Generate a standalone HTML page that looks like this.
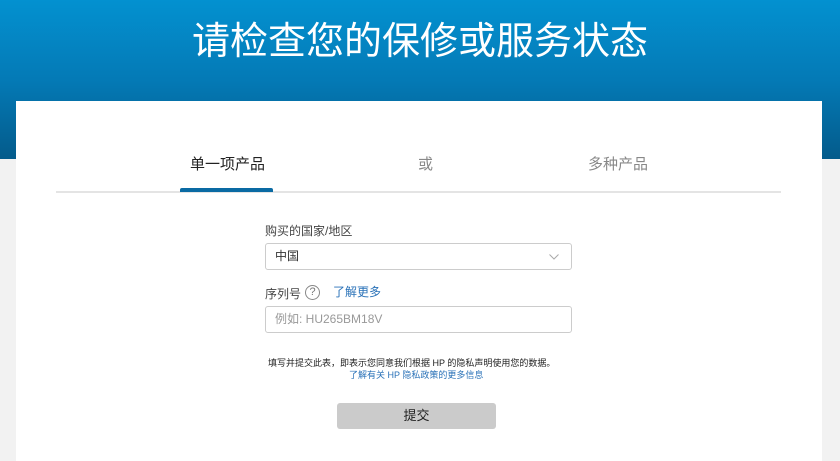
<!DOCTYPE html>
<html><head><meta charset="utf-8"><style>
*{margin:0;padding:0;box-sizing:border-box}
body{width:840px;height:449px;overflow:hidden;background:#f2f2f2;font-family:"Liberation Sans","Noto Sans CJK SC",sans-serif;position:relative}
.hdr{position:absolute;left:0;top:0;width:840px;height:159px;background:linear-gradient(#0391d0 0%,#047ab6 50%,#045b8b 100%)}
h1{position:absolute;left:0;width:840px;top:17px;text-align:center;color:#fff;font-weight:400;font-size:38px;line-height:50px}
.card{position:absolute;left:16px;top:101px;width:806px;height:360px;background:#fff}
.t{position:absolute;top:155px;font-size:15px;line-height:20px}
.line{position:absolute;left:56px;top:191px;width:725px;height:2px;background:#e4e4e4}
.act{position:absolute;left:180px;top:188px;width:93px;height:4px;background:#0a6aa3;border-radius:2px 2px 0 0}
.lbl{position:absolute;left:265px;font-size:12px;color:#444}
.box{position:absolute;left:265px;width:307px;height:27px;border:1px solid #ccc;border-radius:3px;font-size:12px;padding-left:9px;line-height:25px}
.btn{position:absolute;left:337px;top:403px;width:159px;height:26px;background:#cbcbcb;border-radius:3px;text-align:center;line-height:26px;font-size:13px;color:#222}
</style></head><body>
<div class="hdr"></div>
<h1>请检查您的保修或服务状态</h1>
<div class="card"></div>
<div class="t" style="left:190px;color:#222">单一项产品</div>
<div class="t" style="left:418px;color:#888">或</div>
<div class="t" style="left:588px;color:#888">多种产品</div>
<div class="line"></div><div class="act"></div>
<div class="lbl" style="top:222px">购买的国家/地区</div>
<div class="box" style="top:243px;color:#333">中国
<svg style="position:absolute;right:12px;top:10px" width="10" height="6"><path d="M0.5 0.5L5 5L9.5 0.5" fill="none" stroke="#aaa" stroke-width="1"/></svg></div>
<div class="lbl" style="top:285px">序列号</div>
<div style="position:absolute;left:305px;top:285px;width:15px;height:15px;border:1px solid #888;border-radius:50%;font-size:11px;line-height:13px;text-align:center;color:#777">?</div>
<div style="position:absolute;left:333px;top:283px;font-size:12px;color:#2a72b8">了解更多</div>
<div class="box" style="top:306px;color:#999">例如:&nbsp;HU265BM18V</div>
<div style="position:absolute;left:268px;top:356px;font-size:9px;color:#222;white-space:nowrap">填写并提交此表，即表示您同意我们根据 HP 的隐私声明使用您的数据。</div>
<div style="position:absolute;left:349px;top:368px;font-size:9px;color:#2a72b8;white-space:nowrap">了解有关 HP 隐私政策的更多信息</div>
<div class="btn">提交</div>
</body></html>
